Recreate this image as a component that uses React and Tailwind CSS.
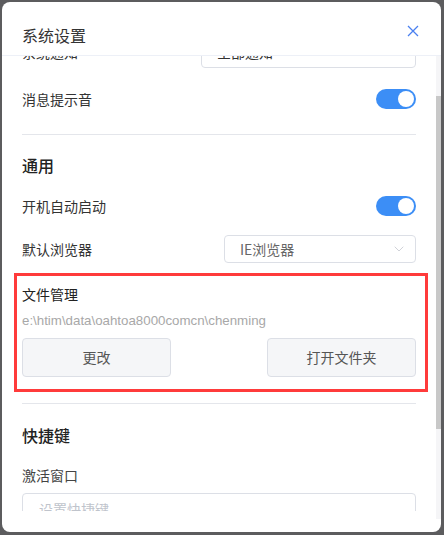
import { ChevronDown } from 'lucide-react'

function Toggle() {
  return (
    <div className="w-[40px] h-[20px] rounded-full bg-[#3c8ef6] flex items-center justify-end pr-[2px]">
      <div className="w-[16px] h-[16px] rounded-full bg-white" />
    </div>
  )
}

function Divider({ className = '' }) {
  return <div className={`h-px bg-[#e4e6eb] ${className}`} />
}

export default function App() {
  return (
    <div className="w-[444px] h-[535px] bg-[#5c5c5e] p-[2px] font-['Noto_Sans_CJK_SC','Noto_Sans',sans-serif]">
      <div className="w-[439px] h-[530px] bg-white rounded-[8px] flex flex-col overflow-hidden">
        {/* header */}
        <div className="h-[54px] border-b border-[#edf0f7] flex justify-between pl-[20px] pr-[22px] pt-[21px] shrink-0">
          <h2 className="text-[16px] leading-[24px] text-[#333]">系统设置</h2>
          <svg width="12" height="12" viewBox="0 0 12 12" className="mt-[2px]">
            <path d="M1 1 L11 11 M11 1 L1 11" stroke="#4a80f0" strokeWidth="1.3" fill="none" />
          </svg>
        </div>

        {/* body */}
        <div className="flex h-[463px]">
          <div className="flex-1">
            <div className="h-[455px] overflow-hidden pl-[20px] pr-[20px]">
              <div className="-mt-[20px] flex flex-col">
                <div className="h-[32px] flex items-center justify-between">
                  <span className="text-[14px] text-[#333]">系统通知</span>
                  <div className="w-[215px] h-[32px] border border-[#dcdfe6] rounded-[4px] flex items-center px-[15px] text-[14px] text-[#333]">
                    全部通知
                  </div>
                </div>

                <div className="mt-[21px] h-[20px] flex items-center justify-between">
                  <span className="text-[14px] text-[#333]">消息提示音</span>
                  <Toggle />
                </div>

                <Divider className="mt-[25px]" />

                <h3 className="mt-[18px] h-[24px] leading-[24px] text-[16px] font-medium text-[#222]">通用</h3>

                <div className="mt-[19px] h-[20px] flex items-center justify-between">
                  <span className="text-[14px] text-[#333]">开机自动启动</span>
                  <Toggle />
                </div>

                <div className="mt-[19px] h-[28px] flex items-center justify-between">
                  <span className="text-[14px] text-[#333]">默认浏览器</span>
                  <div className="w-[192px] h-[28px] border border-[#dcdfe6] rounded-[4px] flex items-center justify-between pl-[15px] pr-[8px] text-[14px] text-[#666]">
                    <span>IE浏览器</span>
                    <ChevronDown className="w-[16px] h-[16px] text-[#c8cbd2]" strokeWidth={1.3} />
                  </div>
                </div>

                <div className="relative mt-[10px] pt-[11px] pb-[15px]">
                  <div className="absolute -left-[8px] -right-[12px] top-0 bottom-0 border-[3px] border-[#ff3b3b]" />
                  <div className="h-[20px] leading-[20px] text-[14px] text-[#222]">文件管理</div>
                  <div className="mt-[7px] h-[20px] leading-[20px] text-[13.3px] text-[#a8a8a8] font-['Liberation_Sans',sans-serif]">e:\htim\data\oahtoa8000comcn\chenming</div>
                  <div className="mt-[7px] flex justify-between">
                    <button className="w-[149px] h-[39px] bg-[#f5f6f8] border border-[#dcdfe6] rounded-[4px] text-[14px] text-[#555]">更改</button>
                    <button className="w-[149px] h-[39px] bg-[#f5f6f8] border border-[#dcdfe6] rounded-[4px] text-[14px] text-[#555]">打开文件夹</button>
                  </div>
                </div>

                <Divider className="mt-[11px]" />

                <h3 className="mt-[19px] h-[24px] leading-[24px] text-[16px] font-medium text-[#222]">快捷键</h3>

                <div className="mt-[18px] h-[20px] leading-[20px] text-[14px] text-[#444]">激活窗口</div>

                <div className="mt-[8px] h-[32px] border border-[#dcdfe6] rounded-[4px] flex items-center px-[16px] text-[14px] text-[#c0c4cc]">
                  设置快捷键
                </div>

                <div className="mt-[20px] h-[20px] leading-[20px] text-[14px] text-[#444]">截图</div>
                <div className="mt-[8px] h-[32px] border border-[#dcdfe6] rounded-[4px]" />
              </div>
            </div>
          </div>

          {/* scrollbar */}
          <div className="w-[5px] bg-[#f5f5f7] pt-[40px]">
            <div className="h-[333px] bg-[#c8c8c8]" />
          </div>
        </div>
      </div>
    </div>
  )
}
